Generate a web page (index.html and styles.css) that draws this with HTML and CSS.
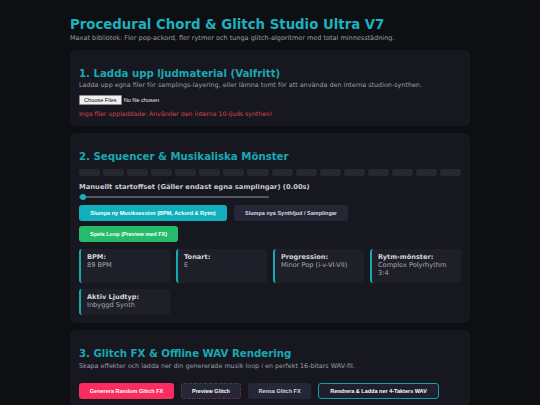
FILE: index.html
```html
<!DOCTYPE html>
<html lang="sv">
<head>
<meta charset="utf-8">
<title>Procedural Chord &amp; Glitch Studio Ultra V7</title>
<link rel="stylesheet" href="styles.css">
</head>
<body>
<div class="wrap">
  <h1 class="title">Procedural Chord &amp; Glitch Studio Ultra V7</h1>
  <p class="subtitle">Maxat bibliotek: Fler pop-ackord, fler rytmer och tunga glitch-algoritmer med total minnesstädning.</p>

  <section class="card">
    <h2 class="card-title">1. Ladda upp ljudmaterial (Valfritt)</h2>
    <p class="desc">Ladda upp egna filer för samplings-layering, eller lämna tomt för att använda den interna studion-synthen.</p>
    <div class="file-row"><span class="file-btn">Choose Files</span><span class="file-none">No file chosen</span></div>
    <p class="warn">Inga filer uppladdade: Använder den interna 10-ljuds synthen!</p>
  </section>

  <section class="card">
    <h2 class="card-title">2. Sequencer &amp; Musikaliska Mönster</h2>
    <div class="steps">
      <span class="step"></span><span class="step"></span><span class="step"></span><span class="step"></span>
      <span class="step"></span><span class="step"></span><span class="step"></span><span class="step"></span>
      <span class="step"></span><span class="step"></span><span class="step"></span><span class="step"></span>
      <span class="step"></span><span class="step"></span><span class="step"></span><span class="step"></span>
    </div>
    <div class="offset-label">Manuellt startoffset (Gäller endast egna samplingar) (0.00s)</div>
    <div class="slider"><span class="thumb"></span></div>
    <div class="btn-row first-row">
      <button class="btn btn-teal">Slumpa ny Musiksession (BPM, Ackord &amp; Rytm)</button>
      <button class="btn btn-dark">Slumpa nya Synthljud / Samplingar</button>
    </div>
    <div class="btn-row">
      <button class="btn btn-green">Spela Loop (Preview med FX)</button>
    </div>
    <div class="info-grid">
      <div class="info"><div class="info-label">BPM:</div><div class="info-val">89 BPM</div></div>
      <div class="info"><div class="info-label">Tonart:</div><div class="info-val">E</div></div>
      <div class="info"><div class="info-label">Progression:</div><div class="info-val">Minor Pop (i-v-VI-VII)</div></div>
      <div class="info"><div class="info-label">Rytm-mönster:</div><div class="info-val">Complex Polyrhythm 3:4</div></div>
      <div class="info info-short"><div class="info-label">Aktiv Ljudtyp:</div><div class="info-val">Inbyggd Synth</div></div>
    </div>
  </section>

  <section class="card">
    <h2 class="card-title">3. Glitch FX &amp; Offline WAV Rendering</h2>
    <p class="desc desc-3">Skapa effekter och ladda ner din genererade musik loop i en perfekt 16-bitars WAV-fil.</p>
    <div class="btn-row fx-row">
      <button class="btn btn-pink">Generera Random Glitch FX</button>
      <button class="btn btn-dashed">Preview Glitch</button>
      <button class="btn btn-dark">Rensa Glitch FX</button>
      <button class="btn btn-outline">Rendrera &amp; Ladda ner 4-Takters WAV</button>
    </div>
  </section>
</div>
</body>
</html>
```

FILE: styles.css
```css
* { box-sizing: border-box; }
html, body { margin: 0; padding: 0; }
body {
  background: #0e0f13;
  color: #a8abb4;
  font-family: "DejaVu Sans", Verdana, sans-serif;
  overflow: hidden;
}
.wrap {
  width: 400px;
  margin: 0 auto;
  padding-top: 16px;
}
.title {
  margin: 0;
  font-size: 13.3px;
  line-height: 18px;
  color: #1db1bd;
  font-weight: bold;
}
.subtitle {
  margin: 0;
  font-size: 6.5px;
  line-height: 9px;
  color: #9a9ea8;
}
.card {
  background: #17181f;
  border-radius: 6px;
  padding: 10px 9px 8px;
  margin-top: 7px;
}
.card-title {
  margin: 7px 0 0;
  font-size: 10.2px;
  line-height: 14px;
  color: #1aa8b3;
  font-weight: bold;
}
.desc {
  margin: 0;
  font-size: 6.4px;
  line-height: 9px;
  color: #9a9ea8;
}
.desc-3 { margin-top: 1px; }
.file-row {
  margin-top: 5px;
  display: flex;
  align-items: center;
  gap: 2px;
  font-family: "Liberation Sans", Arial, sans-serif;
  font-size: 5.6px;
}
.file-btn {
  background: #efefef;
  color: #111;
  border: 1px solid #8f8f8f;
  border-radius: 1px;
  padding: 1px 4px;
  line-height: 6px;
}
.file-none { color: #e8e8e8; }
.warn {
  margin: 4px 0 0;
  font-size: 6.2px;
  line-height: 9px;
  color: #d9464e;
}
.steps {
  margin-top: 5px;
  display: grid;
  grid-template-columns: repeat(16, 1fr);
  gap: 3px;
}
.step {
  height: 7px;
  background: #252731;
  border-radius: 2px;
}
.offset-label {
  margin-top: 6px;
  font-size: 6.75px;
  line-height: 10px;
  font-weight: bold;
  color: #c8cad0;
}
.slider {
  position: relative;
  width: 190px;
  height: 2px;
  background: #55575e;
  border-radius: 1px;
  margin: 4px 0 0;
}
.thumb {
  position: absolute;
  left: 1px;
  top: -2px;
  width: 6px;
  height: 6px;
  border-radius: 50%;
  background: #17b2bc;
}
.btn-row {
  display: flex;
  gap: 7px;
  margin-top: 5px;
}
.btn-row.first-row { margin-top: 7px; }
.btn {
  font-family: "Liberation Sans", Arial, sans-serif;
  font-weight: bold;
  font-size: 5.5px;
  height: 16px;
  padding: 0;
  border: 1px solid transparent;
  border-radius: 3px;
  color: #fff;
  background: #262838;
}
.btn-teal { background: #0fb0bb; width: 148px; }
.btn-dark { background: #252736; color: #d8dae0; }
.btn-row .btn-dark { width: 114px; }
.btn-green { background: #26bb6a; width: 99px; }
.info-grid {
  margin-top: 7px;
  display: grid;
  grid-template-columns: repeat(4, 1fr);
  gap: 6px;
}
.info {
  background: #1e1f28;
  border-left: 2px solid #17a9b3;
  border-radius: 3px;
  padding: 4px 6px;
  height: 34px;
}
.info-short { height: 26px; }
.info-label {
  font-size: 6.6px;
  line-height: 8px;
  font-weight: bold;
  color: #d4d6dc;
}
.info-val {
  font-size: 6.6px;
  line-height: 8px;
  color: #a8abb4;
}
.fx-row { margin-top: 12px; }
.fx-row .btn-pink { background: #fb2c5f; width: 95px; }
.fx-row .btn-dashed { background: #252636; border: 1px dashed #5c3150; width: 60px; }
.fx-row .btn-dark { width: 63px; }
.fx-row .btn-outline { background: #1e2030; border: 1px solid #149ea8; width: 121px; }
```
